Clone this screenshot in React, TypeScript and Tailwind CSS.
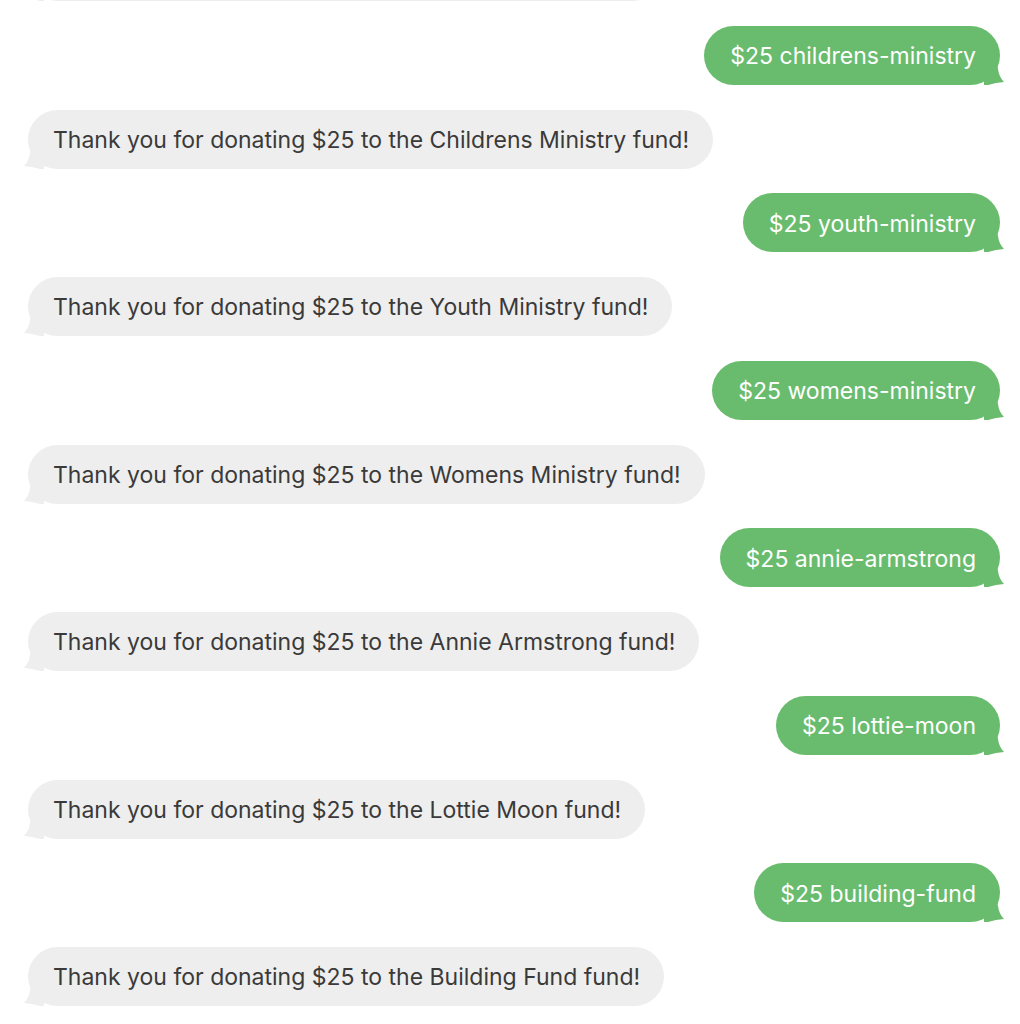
import React from 'react'

type Msg = { from: 'me' | 'bot'; text: string }

const funds: [string, string][] = [
    ['childrens-ministry', 'Childrens Ministry'],
    ['youth-ministry', 'Youth Ministry'],
    ['womens-ministry', 'Womens Ministry'],
    ['annie-armstrong', 'Annie Armstrong'],
    ['lottie-moon', 'Lottie Moon'],
    ['building-fund', 'Building Fund'],
]

const messages: Msg[] = [
    { from: 'bot', text: 'Thank you for donating $25 to the General Fund fund!' },
    ...funds.flatMap(([slug, name]): Msg[] => [
        { from: 'me', text: `$25 ${slug}` },
        { from: 'bot', text: `Thank you for donating $25 to the ${name} fund!` },
    ]),
]

function Bubble({ msg }: { msg: Msg }) {
    if (msg.from === 'me') {
        return (
            <div className="flex justify-end">
                <div className="relative h-[59px] flex items-center rounded-full bg-[#69bc6d] pl-[26px] pr-[24px] pt-[2px] text-white">
                    {msg.text}
                    <svg className="absolute right-[-4px] bottom-0" width="20" height="24" viewBox="0 0 20 24">
                        <path d="M12 0 L14 8 Q15 16 20 21 Q12 21.5 4 24 L0 24 L0 0 Z" fill="#69bc6d" />
                    </svg>
                </div>
            </div>
        )
    }
    return (
        <div className="flex justify-start">
            <div className="relative h-[59px] flex items-center rounded-full bg-[#eeeeee] pl-[25px] pr-[24px] pt-[2px] text-[#3a3a3a]">
                {msg.text}
                <svg className="absolute left-[-4px] bottom-0" width="20" height="24" viewBox="0 0 20 24">
                    <path d="M8 0 L6 8 Q5 16 0 21 Q8 21.5 16 24 L20 24 L20 0 Z" fill="#eeeeee" />
                </svg>
            </div>
        </div>
    )
}

export default function App() {
    return (
        <div className="h-[1024px] overflow-hidden bg-white">
            <div
                className="-mt-[58px] flex flex-col gap-[24.75px] pl-[28px] pr-[20px] text-[23px]"
                style={{ fontFamily: 'Inter, "Liberation Sans", sans-serif' }}
            >
                {messages.map((m, i) => (
                    <Bubble key={i} msg={m} />
                ))}
            </div>
        </div>
    )
}
